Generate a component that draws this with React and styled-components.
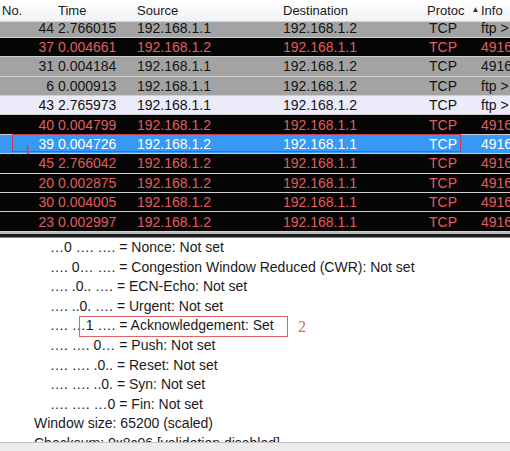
import React from 'react';
import styled, { createGlobalStyle } from 'styled-components';

const GlobalStyle = createGlobalStyle`
  html, body {
    margin: 0;
    padding: 0;
    background: #fff;
    overflow: hidden;
  }
  body {
    font-family: "Liberation Sans", Arial, sans-serif;
  }
`;

const packets = [
  { no: 44, time: '2.766015', src: '192.168.1.1', dst: '192.168.1.2', proto: 'TCP', info: 'ftp > 49160 [ACK] Seq=1', kind: 'grey' },
  { no: 37, time: '0.004661', src: '192.168.1.2', dst: '192.168.1.1', proto: 'TCP', info: '49160 > ftp [ACK]', kind: 'bad' },
  { no: 31, time: '0.004184', src: '192.168.1.1', dst: '192.168.1.2', proto: 'TCP', info: '49160 > ftp [ACK]', kind: 'grey' },
  { no: 6, time: '0.000913', src: '192.168.1.1', dst: '192.168.1.2', proto: 'TCP', info: 'ftp > 49160 [SYN]', kind: 'grey' },
  { no: 43, time: '2.765973', src: '192.168.1.1', dst: '192.168.1.2', proto: 'TCP', info: 'ftp > 49160 [FIN]', kind: 'light' },
  { no: 40, time: '0.004799', src: '192.168.1.2', dst: '192.168.1.1', proto: 'TCP', info: '49160 > ftp [ACK]', kind: 'bad' },
  { no: 39, time: '0.004726', src: '192.168.1.2', dst: '192.168.1.1', proto: 'TCP', info: '49160 > ftp [ACK]', kind: 'selected' },
  { no: 45, time: '2.766042', src: '192.168.1.2', dst: '192.168.1.1', proto: 'TCP', info: '49160 > ftp [ACK]', kind: 'bad' },
  { no: 20, time: '0.002875', src: '192.168.1.2', dst: '192.168.1.1', proto: 'TCP', info: '49160 > ftp [ACK]', kind: 'bad' },
  { no: 30, time: '0.004005', src: '192.168.1.2', dst: '192.168.1.1', proto: 'TCP', info: '49160 > ftp [ACK]', kind: 'bad' },
  { no: 23, time: '0.002997', src: '192.168.1.2', dst: '192.168.1.1', proto: 'TCP', info: '49160 > ftp [ACK]', kind: 'bad' },
];

const flags = [
  { bits: '…0 …. ….', text: 'Nonce: Not set' },
  { bits: '…. 0… ….', text: 'Congestion Window Reduced (CWR): Not set' },
  { bits: '…. .0.. ….', text: 'ECN-Echo: Not set' },
  { bits: '…. ..0. ….', text: 'Urgent: Not set' },
  { bits: '…. …1 ….', text: 'Acknowledgement: Set' },
  { bits: '…. …. 0…', text: 'Push: Not set' },
  { bits: '…. …. .0..', text: 'Reset: Not set' },
  { bits: '…. …. ..0.', text: 'Syn: Not set' },
  { bits: '…. …. …0', text: 'Fin: Not set' },
];

const rowColors = {
  grey: { bg: '#a3a3a3', fg: '#141414' },
  light: { bg: '#ebebf9', fg: '#141414' },
  bad: { bg: '#050505', fg: '#e25d5d' },
  selected: { bg: '#3798f6', fg: '#ffffff' },
};

const COLS = '58px 79px 146px 146px 52px 1fr';

const Screen = styled.div`
  position: relative;
  width: 510px;
  height: 451px;
  overflow: hidden;
  display: flex;
  flex-direction: column;
`;

const Header = styled.div`
  display: grid;
  grid-template-columns: ${COLS};
  height: 22px;
  box-sizing: border-box;
  background: linear-gradient(#ffffff, #f1f2f4);
  border-bottom: 1px solid #d6d6d6;
  font-size: 13px;
  color: #1a1a1a;
  position: relative;
  z-index: 1;
`;

const HeadCell = styled.div`
  display: flex;
  align-items: center;
  gap: 7px;
  padding-left: ${p => (p.$first ? '2px' : '0')};
  margin-left: ${p => (p.$shift ? `${p.$shift}px` : '0')};
  white-space: nowrap;
  overflow: hidden;
`;

const SortArrow = styled.span`
  font-size: 8px;
  color: #333;
  margin-top: -3px;
`;

const List = styled.div`
  height: 210px;
  overflow: hidden;
`;

const Rows = styled.div`
  margin-top: -3.6px;
`;

const Row = styled.div`
  display: grid;
  grid-template-columns: ${COLS};
  height: 19.4px;
  box-sizing: border-box;
  border-bottom: 1px solid #cfcfcf;
  align-items: center;
  font-size: 14px;
  background: ${p => rowColors[p.$kind].bg};
  color: ${p => rowColors[p.$kind].fg};
`;

const Cell = styled.div`
  white-space: nowrap;
  overflow: hidden;
  text-align: ${p => (p.$right ? 'right' : 'left')};
  padding-right: ${p => (p.$right ? '4px' : '0')};
`;

const Splitter = styled.div`
  height: 6px;
  box-sizing: border-box;
  border-top: 2px solid #b8b8b8;
  background: #1c1c1c;
  border-bottom: 1px solid #888;
`;

const Details = styled.div`
  flex: 1;
  overflow: hidden;
  font-size: 14px;
  color: #1a1a1a;
`;

const Line = styled.div`
  height: 19.6px;
  line-height: 19.6px;
  white-space: nowrap;
  padding-left: ${p => p.$indent}px;
`;

const Scrollbar = styled.div`
  height: 8px;
  background: #ececec;
  border-top: 1px solid #c4c4c4;
`;

const AnnotBox = styled.div`
  position: absolute;
  box-sizing: border-box;
  border: 1px solid ${p => p.$color};
`;

const AnnotNum = styled.span`
  position: absolute;
  color: ${p => p.$color};
  font-family: "Liberation Serif", serif;
  font-size: ${p => p.$size}px;
  line-height: 1;
`;

export default function App() {
  return (
    <Screen>
      <GlobalStyle />
      <Header>
        <HeadCell $first>No.</HeadCell>
        <HeadCell>Time</HeadCell>
        <HeadCell>Source</HeadCell>
        <HeadCell>Destination</HeadCell>
        <HeadCell $shift={-2}>Protoc<SortArrow>▲</SortArrow></HeadCell>
        <HeadCell>Info</HeadCell>
      </Header>
      <List>
        <Rows>
          {packets.map(p => (
            <Row key={p.no} $kind={p.kind}>
              <Cell $right>{p.no}</Cell>
              <Cell>{p.time}</Cell>
              <Cell>{p.src}</Cell>
              <Cell>{p.dst}</Cell>
              <Cell>{p.proto}</Cell>
              <Cell>{p.info}</Cell>
            </Row>
          ))}
        </Rows>
      </List>
      <Splitter />
      <Details>
        {flags.map(f => (
          <Line key={f.text} $indent={50}>{f.bits} = {f.text}</Line>
        ))}
        <Line $indent={34}>Window size: 65200 (scaled)</Line>
        <Line $indent={34}>Checksum: 0x8c06 [validation disabled]</Line>
      </Details>
      <Scrollbar />

      <AnnotBox $color="#c3404f" style={{ left: 12, top: 134, width: 449, height: 18 }} />
      <AnnotNum $color="#c3404f" $size={13} style={{ left: 25, top: 143 }}>1</AnnotNum>
      <AnnotBox $color="#e06464" style={{ left: 79, top: 316, width: 209, height: 21 }} />
      <AnnotNum $color="#e06464" $size={16} style={{ left: 298, top: 319 }}>2</AnnotNum>
    </Screen>
  );
}
